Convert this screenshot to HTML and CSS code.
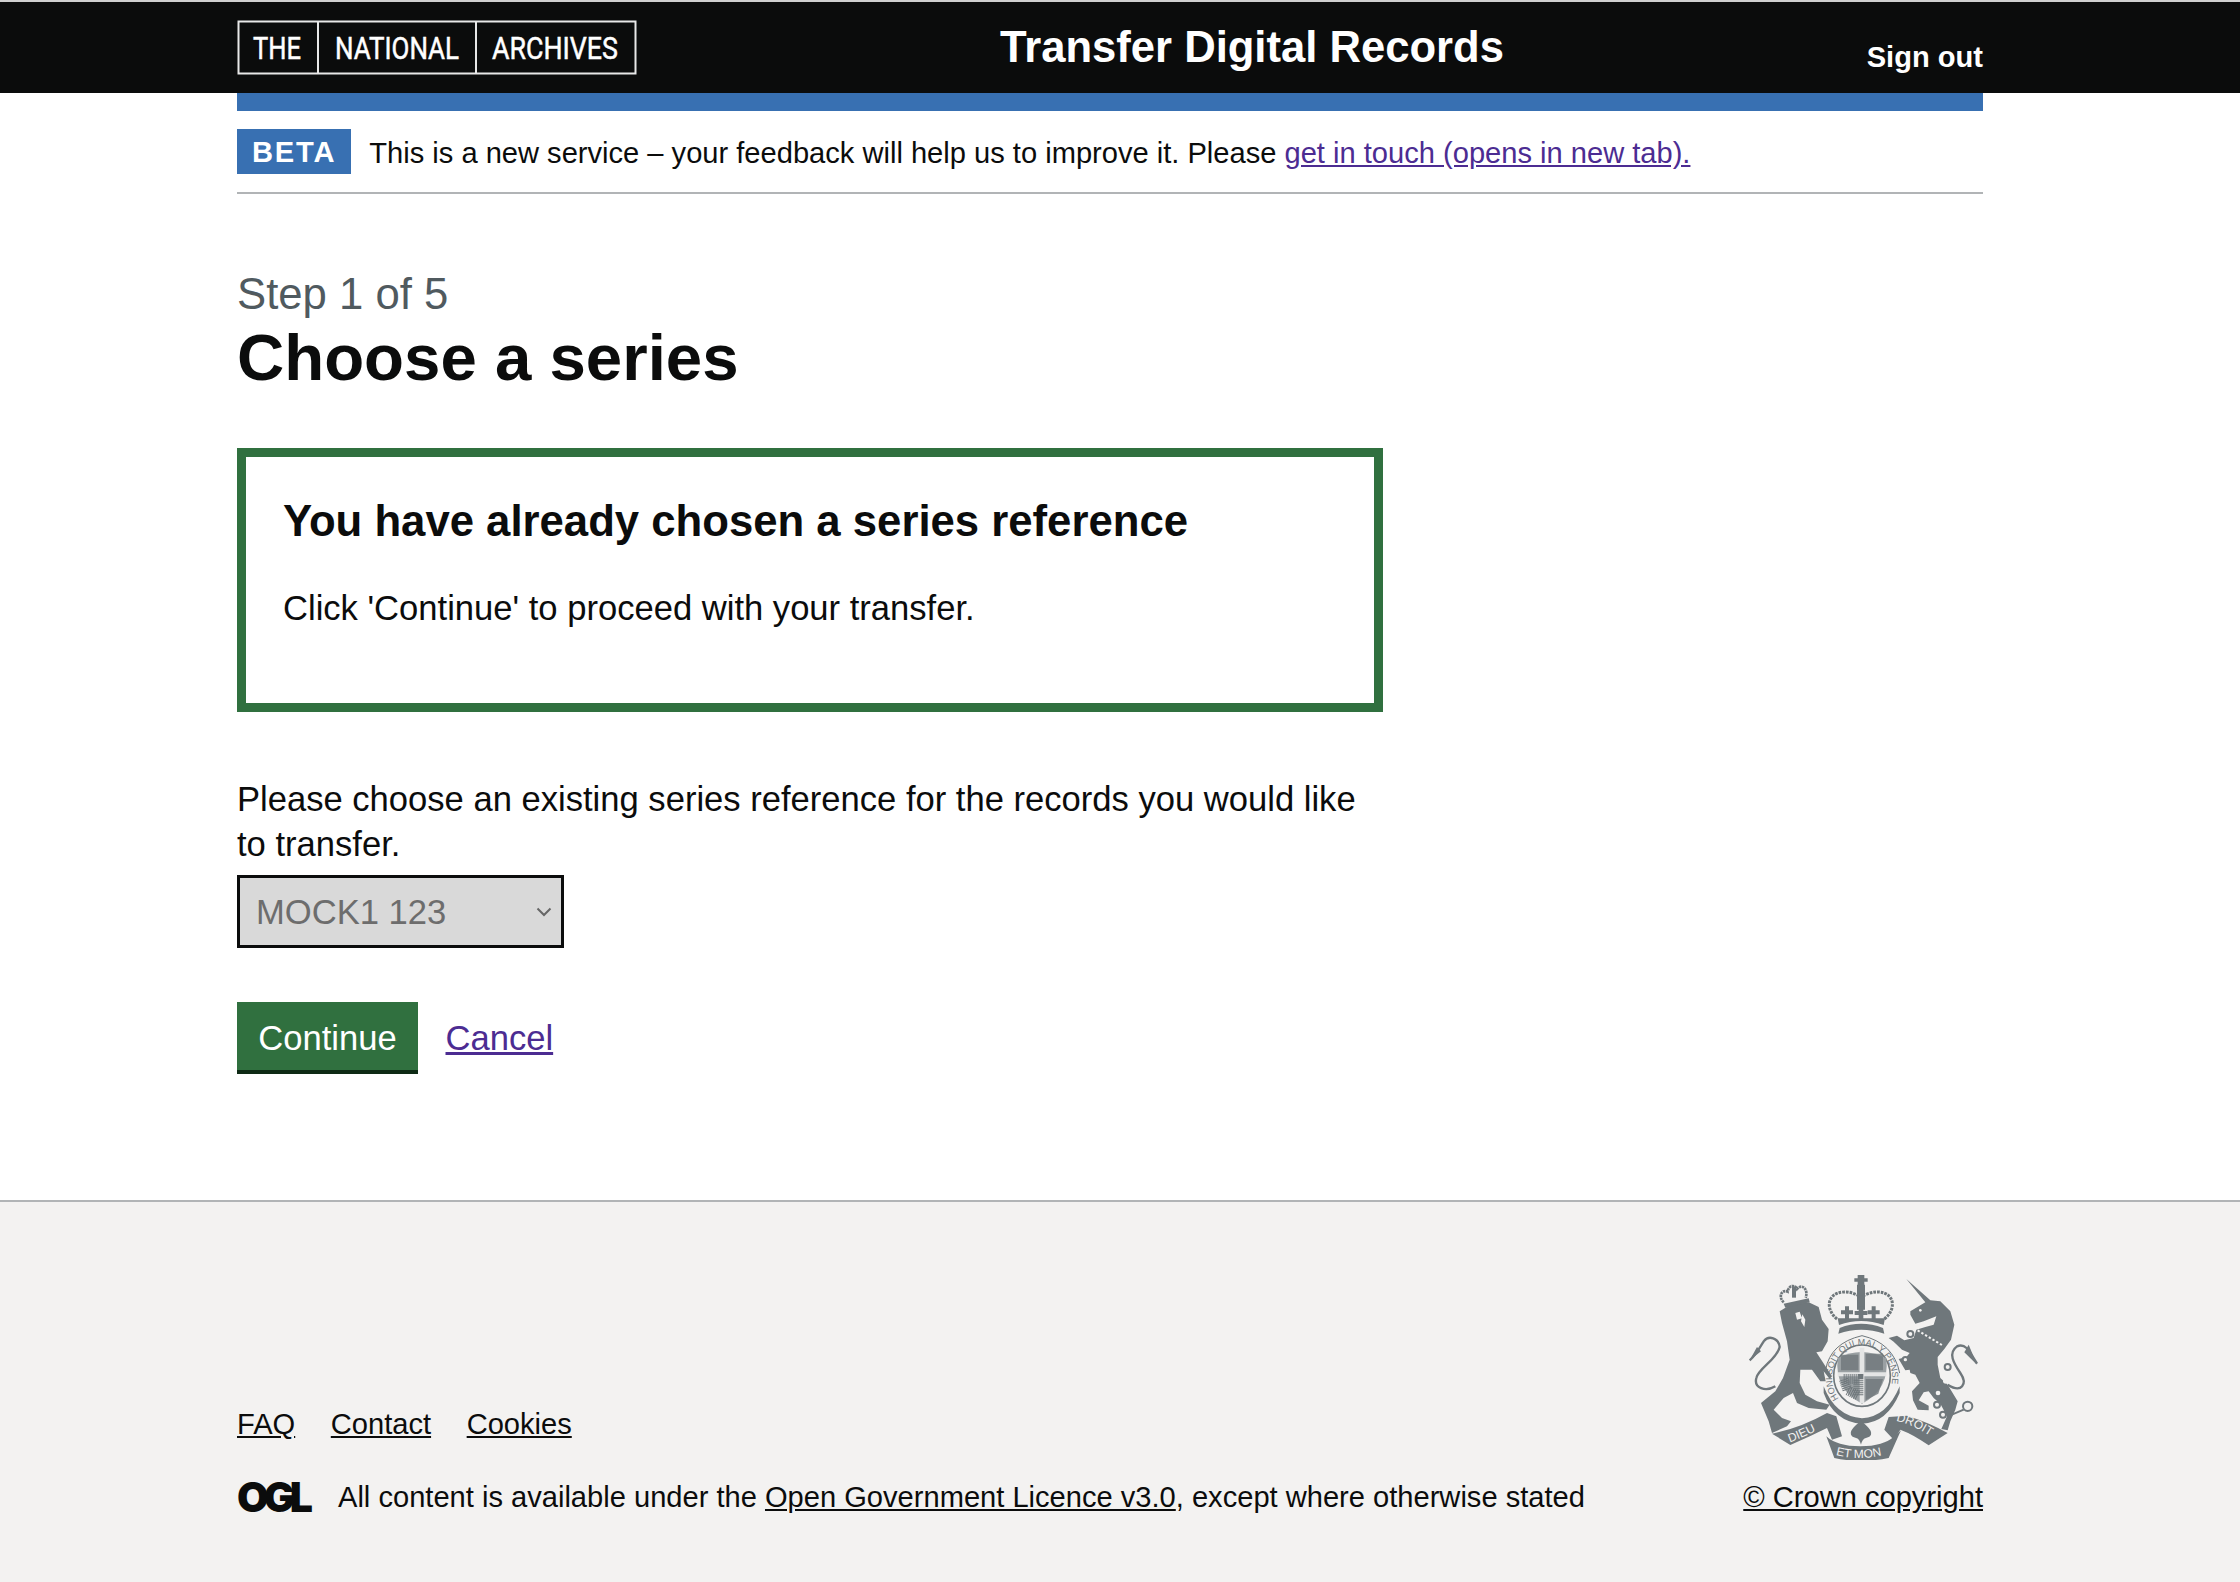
FILE: index.html
```html
<!DOCTYPE html>
<html>
<head>
  <meta charset="UTF-8">
  <title>Choose a series</title>
  <link rel="stylesheet" href="styles.css">
</head>
<body>
  <header class="top-bar">
    <div class="wrap top-row">
      <svg class="tna-logo" width="400" height="56" viewBox="0 0 400 56">
        <rect x="1.5" y="1.5" width="397" height="52" fill="none" stroke="#e8e8e8" stroke-width="2"/>
        <line x1="81" y1="1" x2="81" y2="54" stroke="#e8e8e8" stroke-width="2"/>
        <line x1="239" y1="1" x2="239" y2="54" stroke="#e8e8e8" stroke-width="2"/>
        <text x="16" y="39" textLength="48" lengthAdjust="spacingAndGlyphs">THE</text>
        <text x="98" y="39" textLength="124" lengthAdjust="spacingAndGlyphs">NATIONAL</text>
        <text x="255" y="39" textLength="126" lengthAdjust="spacingAndGlyphs">ARCHIVES</text>
      </svg>
      <a class="service-name" href="#">Transfer Digital Records</a>
      <a class="sign-out" href="#">Sign out</a>
    </div>
  </header>
  <div class="wrap">
    <div class="blue-bar"></div>
    <div class="phase">
      <strong class="phase-tag">BETA</strong>
      <span class="phase-text">This is a new service – your feedback will help us to improve it. Please <a href="#">get in touch (opens in new tab).</a></span>
    </div>
    <main class="content">
      <span class="caption">Step 1 of 5</span>
      <h1>Choose a series</h1>
      <div class="panel">
        <h2>You have already chosen a series reference</h2>
        <p>Click 'Continue' to proceed with your transfer.</p>
      </div>
      <label class="field-label" for="series">Please choose an existing series reference for the records you would like to transfer.</label>
      <select class="series-select" id="series" disabled>
        <option>MOCK1 123</option>
      </select>
      <div class="actions">
        <button class="button" type="button">Continue</button>
        <a href="#">Cancel</a>
      </div>
    </main>
  </div>
  <footer class="footer">
    <div class="wrap footer-row">
      <div class="footer-left">
        <ul class="footer-links">
          <li><a href="#">FAQ</a></li>
          <li><a href="#">Contact</a></li>
          <li><a href="#">Cookies</a></li>
        </ul>
        <div class="licence">
          <span class="ogl">OGL</span>
          <span>All content is available under the <a href="#">Open Government Licence v3.0</a>, except where otherwise stated</span>
        </div>
      </div>
      <div class="footer-right">
        <svg class="crest" width="232" height="187" viewBox="50 40 696 561">
          <defs>
            <path id="motto-ring" d="M328 420 A90 98 0 1 1 462 420"/>
            <path id="rib-left" d="M178 548 Q235 528 292 494"/>
            <path id="rib-mid" d="M316 586 Q390 606 474 582"/>
            <path id="rib-right" d="M497 484 Q555 496 614 540"/>
          </defs>
          <g fill="#6f777b">
            <!-- crown -->
            <path d="M382 46 H402 V75 H382 Z M372 56 H412 V66 H372 Z M380 75 H404 V150 H380 Z"/>
            <path d="M320 178 C285 150 288 100 340 97 C360 95 380 105 392 112 C405 105 425 95 445 97 C495 100 498 150 462 178" fill="none" stroke="#6f777b" stroke-width="9" stroke-dasharray="8 3"/>
            <path d="M344 140 H356 V152 H368 V164 H356 V178 H344 V164 H332 V152 H344 Z M424 140 H436 V152 H448 V164 H436 V178 H424 V164 H412 V152 H424 Z M385 140 H399 V154 H411 V166 H399 V178 H385 V166 H373 V154 H385 Z"/>
            <path d="M322 176 H464 L460 196 Q392 172 326 196 Z"/>
            <path d="M328 205 Q392 180 458 205 L462 222 Q392 198 324 222 Z"/>
            <!-- garter and shield -->
            <ellipse cx="395" cy="348" rx="85" ry="92" fill="none" stroke="#6f777b" stroke-width="5"/>
            <path d="M322 296 Q392 258 468 296 Q478 390 395 432 Q312 390 322 296 Z" fill="#9aa0a3"/>
            <path d="M322 338 H468 V350 H322 Z M388 264 H402 V430 H388 Z" fill="#e4e5e5"/>
            <path d="M340 358 H384 V408 L352 392 Z" fill="none" stroke="#6f777b" stroke-width="30" stroke-dasharray="3 3"/>
            <path d="M406 282 H458 V332 H406 Z M406 358 H458 L444 402 L406 422 Z M332 285 H384 V332 H332 Z" opacity=".8"/>
            <path d="M280 380 Q315 470 395 476 Q470 472 508 380 L508 400 Q470 490 395 492 Q312 488 280 400 Z"/>
            <path d="M286 330 Q300 250 395 228 Q490 250 508 340" fill="none" stroke="#6f777b" stroke-width="3"/>
            <circle cx="365" cy="458" r="7" fill="#f3f2f1"/>
            <circle cx="400" cy="465" r="7" fill="#f3f2f1"/>
            <text class="crest-motto"><textPath href="#motto-ring" startOffset="1%">HONI SOIT QUI MAL Y PENSE</textPath></text>
            <!-- lion -->
            <g transform="translate(30 30)">
              <path d="M118 125 L150 105 L205 98 L235 112 L245 150 L265 178 L262 215 L245 245 L228 248 L275 320 L268 328 L250 305 L256 335 L240 335 L215 300 L180 300 L178 340 L195 375 L230 395 L268 405 L258 420 L205 415 L170 400 L158 370 L130 385 L100 420 L125 445 L152 455 L140 470 L95 490 L85 455 L62 400 L105 365 L128 325 L148 270 L140 215 L125 160 Z"/>
              <path d="M165 130 L178 126 L185 146 L170 150 Z M186 134 L195 150 L192 172 L182 155 Z" fill="#f3f2f1"/>
              <path d="M105 350 C75 368 40 355 48 325 C55 295 110 270 118 232 C115 205 85 195 70 215 C58 235 45 258 28 272" fill="none" stroke="#6f777b" stroke-width="7"/>
              <path d="M28 272 L50 232 L62 245 Z"/>
              <!-- its crown -->
              <path d="M130 102 L205 86 L208 98 L135 114 Z"/>
              <path d="M130 98 C112 80 125 58 142 66 C145 45 165 45 170 58 C185 40 205 60 196 84" fill="none" stroke="#6f777b" stroke-width="8" stroke-dasharray="7 2"/>
              <path d="M155 50 H167 V84 H155 Z"/>
            </g>
            <!-- unicorn -->
            <g transform="translate(390 30)">
              <path d="M138 28 L210 92 L240 95 L270 125 L282 165 L272 210 L252 238 L232 262 L232 285 L240 325 L262 345 L292 395 L285 420 L270 455 L262 482 L243 478 L260 440 L240 402 L220 385 L205 365 L190 368 L175 392 L205 408 L205 422 L172 420 L158 392 L155 365 L178 340 L165 315 L150 310 L148 300 L135 302 L115 268 L138 262 L148 250 L125 240 L100 216 L85 205 L110 198 L132 212 L160 205 L168 180 L195 172 L220 165 L228 140 L190 155 L165 162 L150 135 L150 125 L195 98 Z"/>
              <path d="M172 182 L248 228" fill="none" stroke="#f3f2f1" stroke-width="6" stroke-dasharray="7 6"/>
              <circle cx="180" cy="122" r="4" fill="#f3f2f1"/>
              <circle cx="255" cy="335" r="7" fill="#f3f2f1"/>
              <circle cx="233" cy="370" r="7" fill="#f3f2f1"/>
              <path d="M262 345 C305 372 322 342 300 310 C280 280 262 250 290 230 C315 220 325 240 350 282" fill="none" stroke="#6f777b" stroke-width="7"/>
              <path d="M350 285 L312 248 L325 225 Z"/>
              <g fill="#f3f2f1" stroke="#6f777b" stroke-width="6">
                <circle cx="262" cy="292" r="9"/>
                <circle cx="150" cy="193" r="9"/>
                <circle cx="135" cy="270" r="8"/>
                <circle cx="230" cy="405" r="9"/>
                <circle cx="248" cy="435" r="9"/>
                <circle cx="322" cy="410" r="14"/>
                <path d="M262 440 L310 420" fill="none"/>
              </g>
            </g>
            <!-- ribbon -->
            <path d="M125 522 Q210 505 290 460 L318 470 L335 530 L305 540 L290 505 Q240 530 180 556 Z"/>
            <path d="M288 530 Q320 560 390 560 Q460 560 492 530 L512 512 L475 595 Q390 612 312 595 Z"/>
            <path d="M475 472 L530 468 Q600 490 652 520 L595 557 Q550 525 510 510 L490 540 L462 510 Z"/>
            <path d="M392 482 C375 500 358 510 362 525 C370 540 385 525 392 555 C400 525 414 540 422 525 C426 510 408 500 392 482 Z"/>
            <g class="crest-scroll">
              <text><textPath href="#rib-left">DIEU</textPath></text>
              <text><textPath href="#rib-mid">ET MON</textPath></text>
              <text><textPath href="#rib-right">DROIT</textPath></text>
            </g>
          </g>
        </svg>
        <a href="#">© Crown copyright</a>
      </div>
    </div>
  </footer>
</body>
</html>
```

FILE: styles.css
```css
html, body { margin: 0; padding: 0; }
body { font-family: "Liberation Sans", Arial, sans-serif; font-size: 34.6px; line-height: 44.5px; color: #0b0c0c; background: #fff; }
a { color: #4c2c92; }

.wrap { width: 1746px; margin-left: 237px; }

.top-bar { background: #0b0c0c; border-top: 2px solid #d0d0d0; height: 91px; }
.top-row { display: flex; align-items: flex-start; height: 91px; }
.tna-logo { flex: none; margin-top: 18px; }
.tna-logo text { fill: #fff; stroke: #fff; stroke-width: .5px; font-family: "Liberation Sans Narrow", Roboto, sans-serif; font-size: 31px; }
.service-name { margin-left: 363px; margin-top: 20px; color: #fff; font-size: 43.6px; font-weight: 700; line-height: 50px; text-decoration: none; }
.sign-out { margin-left: auto; margin-top: 35px; color: #fff; font-size: 29.1px; font-weight: 700; line-height: 40px; text-decoration: none; }

.blue-bar { background: #3870b2; height: 18px; }
.phase { display: flex; align-items: center; gap: 18px; height: 83px; border-bottom: 2px solid #b1b4b6; font-size: 29.1px; box-sizing: border-box; }
.phase-tag { background: #3870b2; color: #fff; font-size: 29.1px; letter-spacing: 1.8px; line-height: 43px; padding: 2px 15px 0; }
.phase-text { padding-top: 3px; }

.content { padding-top: 72px; }
.caption { display: block; color: #505a5f; font-size: 43.7px; line-height: 55px; }
h1 { margin: 0; font-size: 65.4px; line-height: 73px; font-weight: 700; }
.panel { box-sizing: border-box; width: 1146px; height: 264px; margin-top: 54px; border: 9px solid #30703f; padding: 36px 36px 36px 37px; }
.panel h2 { margin: 0; font-size: 43.7px; line-height: 55px; font-weight: 700; }
.panel p { margin: 38px 0 0; }

.field-label { display: block; width: 1146px; margin-top: 65px; }
.series-select { display: block; box-sizing: border-box; width: 327px; height: 73px; margin: 9px 0 0; padding: 2px 16px 0; border: 3px solid #0b0c0c; border-radius: 0; appearance: none; font: inherit; color: #6d6d6d; opacity: 1;
  background: #d9d9d9 url("data:image/svg+xml,%3Csvg xmlns='http://www.w3.org/2000/svg' width='16' height='10'%3E%3Cpath d='M1.5 1.5 L8 8 L14.5 1.5' fill='none' stroke='%23666' stroke-width='2'/%3E%3C/svg%3E") no-repeat right 9px center; }

.actions { display: flex; align-items: center; gap: 27.5px; margin-top: 54px; }
.button { box-sizing: border-box; height: 72px; width: 181px; padding: 4px 0 0; border: 0; border-bottom: 4px solid #0e2a15; background: #30703f; color: #fff; font: inherit; }

.footer { margin-top: 126px; height: 382px; background: #f3f2f1; border-top: 2px solid #b1b4b6; box-sizing: border-box; font-size: 29.1px; line-height: 36px; }
.footer a { color: #0b0c0c; }
.footer-row { display: flex; justify-content: space-between; align-items: flex-end; height: 313px; }
.footer-links { display: flex; gap: 35.6px; margin: 0 0 37px; padding: 0; list-style: none; }
.licence { display: flex; align-items: center; gap: 25px; }
.ogl { font-family: Inter, "Liberation Sans", sans-serif; font-size: 41px; font-weight: 900; letter-spacing: -5px; line-height: 36px; width: 76px; }
.footer-right { display: flex; flex-direction: column; align-items: flex-end; }
.crest { margin: 0 4px 19px 0; display: block; }
.crest-motto { fill: #6f777b; font-size: 27px; font-family: "Liberation Sans", sans-serif; }
.crest-scroll text { fill: #f3f2f1; font-size: 36px; font-family: "Liberation Sans", sans-serif; }
```
